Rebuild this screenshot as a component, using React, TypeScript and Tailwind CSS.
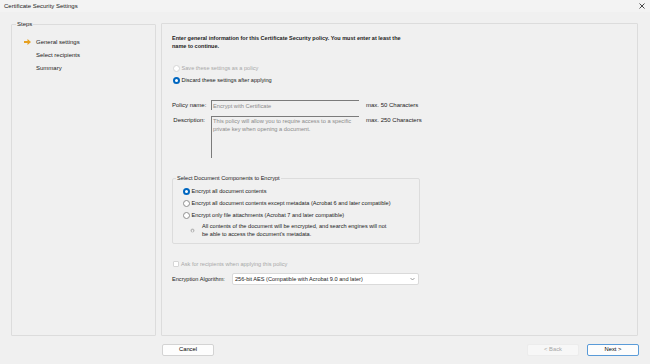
import React from "react";

function Radio({ checked, disabled }: { checked?: boolean; disabled?: boolean }) {
  if (checked) {
    return <span className="w-[7px] h-[7px] rounded-full border-[2px] border-[#0067c0] bg-white shrink-0" />;
  }
  return (
    <span
      className={
        "w-[7px] h-[7px] rounded-full border bg-white shrink-0 " +
        (disabled ? "border-[#d6d6d6]" : "border-[#8f8f8f]")
      }
    />
  );
}

function Option({ label, checked, disabled }: { label: string; checked?: boolean; disabled?: boolean }) {
  return (
    <div className={"flex items-center gap-[1.5px] h-[12px] whitespace-nowrap " + (disabled ? "text-[#a8a8a8]" : "")}>
      <Radio checked={checked} disabled={disabled} />
      <span>{label}</span>
    </div>
  );
}

function Btn({ label, kind }: { label: string; kind?: "default" | "disabled" }) {
  const cls =
    kind === "default"
      ? "border-[#5a9bd8] bg-[#fdfdfd] text-black"
      : kind === "disabled"
      ? "border-[#ececec] bg-[#f7f7f7] text-[#a6a6a6]"
      : "border-[#d3d3d3] bg-[#fdfdfd] text-black";
  return (
    <button className={"w-[52px] h-[12px] border rounded-[2px] flex items-center justify-center leading-none text-[5.8px] " + cls}>
      {label}
    </button>
  );
}

export default function App() {
  return (
    <div
      className="w-[650px] h-[364px] bg-[#f0f0f0] flex flex-col text-[6px] leading-[8px] text-[#1b1b1b] overflow-hidden"
      style={{ fontFamily: '"Liberation Sans", Arial, sans-serif' }}
    >
      {/* Title bar */}
      <div className="h-[12px] bg-[#f3f3f3] flex items-center justify-between pl-[4px] pr-[4px]">
        <span className="text-[6px]">Certificate Security Settings</span>
        <svg width="6" height="6" viewBox="0 0 6 6" className="mr-[1px]">
          <path d="M0.5 0.5 L5.5 5.5 M5.5 0.5 L0.5 5.5" stroke="#333" strokeWidth="0.9" />
        </svg>
      </div>

      {/* Body */}
      <div className="flex gap-[5px] pl-[11px] pr-[12px] mt-[9px] h-[315px]">
        {/* Steps */}
        <fieldset className="w-[145px] border border-[#dcdcdc] rounded-[1px] pl-[12px]">
          <legend className="-ml-[8px] px-[1px] text-[6px] leading-[6px]">Steps</legend>
          <div className="flex flex-col mt-[8px]">
            {[
              { label: "General settings", active: true },
              { label: "Select recipients" },
              { label: "Summary" },
            ].map((s) => (
              <div key={s.label} className="flex items-center h-[13px]">
                <span className="w-[12px] flex items-center">
                  {s.active && (
                    <svg width="7" height="6" viewBox="0 0 7 6">
                      <path d="M0 2 H3.5 V0 L7 3 L3.5 6 V4 H0 Z" fill="#e6a020" />
                    </svg>
                  )}
                </span>
                <span>{s.label}</span>
              </div>
            ))}
          </div>
        </fieldset>

        {/* Main panel */}
        <div className="flex-1 border border-[#dcdcdc] rounded-[1px] pl-[10px] mt-[2px] text-[5.6px]">
          <p className="font-bold mt-[10px] w-[240px] leading-[8px] text-[5.5px]">
            Enter general information for this Certificate Security policy. You must enter at least the name to continue.
          </p>

          <div className="mt-[12px] ml-[1px]">
            <Option label="Save these settings as a policy" disabled />
            <Option label="Discard these settings after applying" checked />
          </div>

          <div className="flex items-center mt-[14px] h-[10px] text-[6px]">
            <span className="w-[33px] text-right whitespace-nowrap">Policy name:</span>
            <div className="ml-[6px] w-[148px] h-[10px] border-t-[1.5px] border-l-[1.5px] border-[#7b7b7b] flex items-center pl-[1px] text-[#8a8a8a] text-[5.7px]">
              Encrypt with Certificate
            </div>
            <span className="ml-[7px] whitespace-nowrap">max. 50 Characters</span>
          </div>

          <div className="flex items-start mt-[6px] text-[6px]">
            <span className="w-[33px] text-right whitespace-nowrap">Description:</span>
            <div className="ml-[6px] w-[148px] h-[42px] border-t-[1.5px] border-l-[1.5px] border-[#7b7b7b] pl-[1px] text-[#8a8a8a] leading-[8px] text-[5.7px]">
              This policy will allow you to require access to a specific private key when opening a document.
            </div>
            <span className="ml-[7px] whitespace-nowrap">max. 250 Characters</span>
          </div>

          <fieldset className="mt-[16px] w-[248px] border border-[#dcdcdc] rounded-[2px] pl-[10px] pb-[5px]">
            <legend className="-ml-[7px] px-[1px]">Select Document Components to Encrypt</legend>
            <div className="mt-[3px]">
              <Option label="Encrypt all document contents" checked />
              <Option label="Encrypt all document contents except metadata (Acrobat 6 and later compatible)" />
              <Option label="Encrypt only file attachments (Acrobat 7 and later compatible)" />
            </div>
            <div className="flex items-center mt-[1px]">
              <span className="w-[19px] flex justify-center">
                <svg width="5" height="5" viewBox="0 0 5 5">
                  <circle cx="2.5" cy="2.5" r="2" fill="#bdbdbd" />
                  <rect x="2.1" y="2" width="0.8" height="1.8" fill="#fff" />
                </svg>
              </span>
              <span className="w-[189px] leading-[8px]">
                All contents of the document will be encrypted, and search engines will not be able to access the document's metadata.
              </span>
            </div>
          </fieldset>

          <div className="flex items-center h-[12px] mt-[14px] ml-[1px] gap-[2px] text-[#a8a8a8]">
            <span className="w-[6px] h-[6px] border border-[#d6d6d6] bg-white rounded-[1px]" />
            <span>Ask for recipients when applying this policy</span>
          </div>

          <div className="flex items-center mt-[3px] h-[12px]">
            <span className="w-[60px] whitespace-nowrap">Encryption Algorithm:</span>
            <div className="w-[187px] h-[12px] bg-white border border-[#dadada] rounded-[2px] flex items-center justify-between pl-[2px] pr-[3px]">
              <span>256-bit AES (Compatible with Acrobat 9.0 and later)</span>
              <svg width="5" height="4" viewBox="0 0 5 4">
                <path d="M0.5 1 L2.5 3 L4.5 1" stroke="#777" strokeWidth="0.7" fill="none" />
              </svg>
            </div>
          </div>
        </div>
      </div>

      {/* Footer */}
      <div className="flex items-center pl-[162px] pr-[11px] mt-[8px]">
        <Btn label="Cancel" />
        <div className="flex-1" />
        <Btn label="< Back" kind="disabled" />
        <div className="w-[8px]" />
        <Btn label="Next >" kind="default" />
      </div>
    </div>
  );
}
